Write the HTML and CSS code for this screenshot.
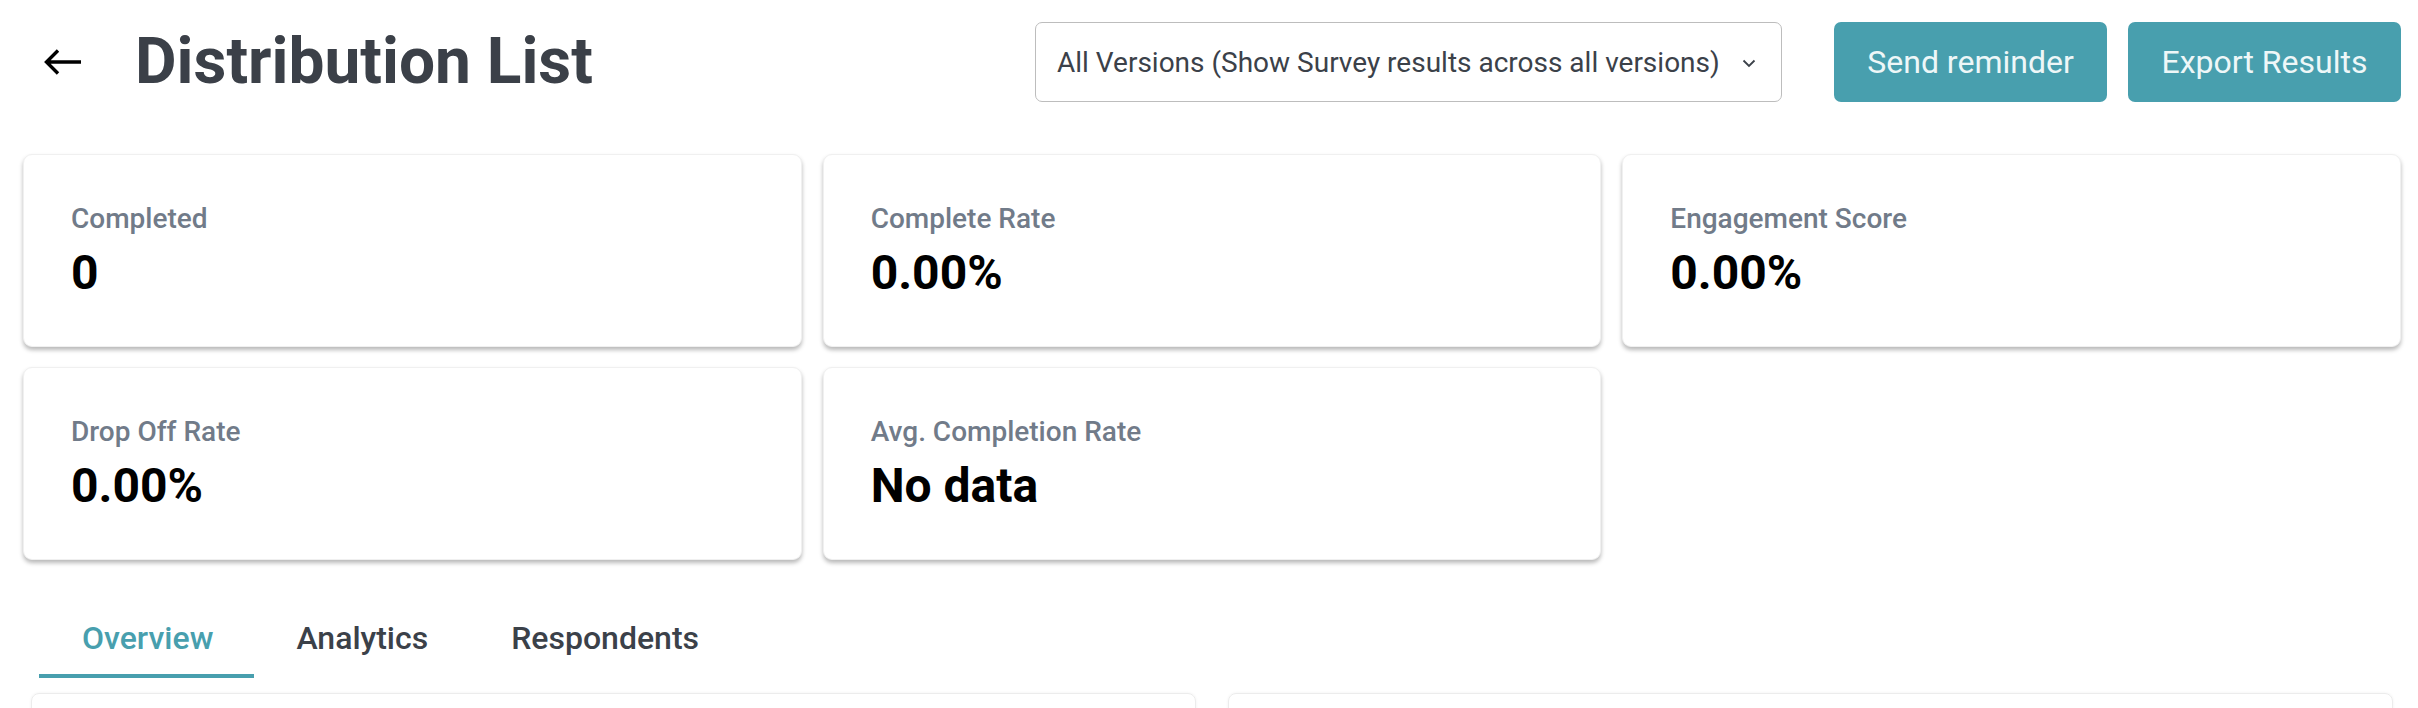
FILE: index.html
```html
<!DOCTYPE html>
<html>
<head>
<meta charset="utf-8">
<link rel="stylesheet" href="styles.css">
</head>
<body>
<div class="page">
  <header class="header">
    <div class="title-group">
      <button class="back" aria-label="Back">
        <svg width="40" height="30" viewBox="0 0 40 30"><path d="M38 15 H4 M15 3.5 L3.5 15 L15 26.5" fill="none" stroke="#000" stroke-width="3.4" stroke-linecap="butt" stroke-linejoin="miter"/></svg>
      </button>
      <h1 class="title">Distribution List</h1>
    </div>
    <div class="actions">
      <div class="select">
        <span>All Versions (Show Survey results across all versions)</span>
        <svg class="chev" width="14" height="9" viewBox="0 0 14 9"><path d="M1.5 1.5 L7 7 L12.5 1.5" fill="none" stroke="#3b4149" stroke-width="1.8"/></svg>
      </div>
      <button class="btn">Send reminder</button>
      <button class="btn">Export Results</button>
    </div>
  </header>

  <section class="cards">
    <div class="card"><div class="label">Completed</div><div class="value">0</div></div>
    <div class="card"><div class="label">Complete Rate</div><div class="value">0.00%</div></div>
    <div class="card"><div class="label">Engagement Score</div><div class="value">0.00%</div></div>
    <div class="card"><div class="label">Drop Off Rate</div><div class="value">0.00%</div></div>
    <div class="card"><div class="label">Avg. Completion Rate</div><div class="value">No data</div></div>
  </section>

  <nav class="tabs">
    <div class="tab active">Overview</div>
    <div class="tab">Analytics</div>
    <div class="tab">Respondents</div>
  </nav>

  <section class="panels">
    <div class="panel"></div>
    <div class="panel"></div>
  </section>
</div>
</body>
</html>
```

FILE: styles.css
```css
* { box-sizing: border-box; }
html, body { margin: 0; padding: 0; background: #fff; }
body { font-family: Roboto, "Noto Sans", Arial, sans-serif; color: #3b4149; overflow: hidden; }

.page { padding: 0 17px 0 23px; }

.header {
  display: flex;
  align-items: center;
  justify-content: space-between;
  padding-top: 22px;
  height: 102px;
}
.title-group { display: flex; align-items: center; }
.back {
  border: 0; background: none; padding: 0; margin: 0 0 0 20px;
  width: 40px; height: 30px; display: flex; cursor: pointer;
}
.title {
  margin: 0 0 0 52px;
  font-size: 64px;
  font-weight: 700;
  color: #3b4048;
  line-height: 80px;
  letter-spacing: 0;
}
.actions { display: flex; align-items: center; height: 80px; }
.select {
  width: 747px; height: 80px;
  border: 1.5px solid #bdbdbd;
  border-radius: 7px;
  display: flex; align-items: center; justify-content: space-between;
  padding: 0 25px 0 21px;
  font-size: 28px;
  color: #3b4149;
  margin-right: 52px;
}
.chev { margin-top: 2px; }
.btn {
  height: 80px;
  border: 0;
  border-radius: 7px;
  background: #489fae;
  color: #eef7f8;
  font-family: Roboto, sans-serif;
  font-size: 32px;
  font-weight: 400;
  padding: 0;
  width: 273px;
  margin-left: 21px;
}
.btn:first-of-type { margin-left: 0; }

.cards {
  margin-top: 52px;
  display: grid;
  grid-template-columns: repeat(3, 1fr);
  grid-auto-rows: 193px;
  gap: 20px 21px;
}
.card {
  background: #fff;
  border-radius: 9px;
  border: 1px solid #f0f0f0;
  box-shadow: 0 3px 4px rgba(0,0,0,0.28);
  padding: 47px 0 0 47px;
}
.label {
  font-size: 28px;
  font-weight: 500;
  color: #717b89;
}
.value {
  margin-top: 9px;
  font-size: 48px;
  font-weight: 700;
  color: #000;
}

.tabs {
  display: flex;
  margin: 36px 0 0 16px;
}
.tab {
  padding: 23px 41px 17px 42px;
  font-size: 32px;
  font-weight: 500;
  color: #3b4149;
  border-bottom: 4px solid transparent;
}
.tab.active { color: #489fae; border-bottom-color: #489fae; padding-left: 43px; }

.panels {
  margin: 15px 8px 0;
  display: grid;
  grid-template-columns: 1fr 1fr;
  gap: 32px;
}
.panel {
  height: 120px;
  border: 1px solid #ececec;
  border-radius: 8px;
  box-shadow: 0 0 3px rgba(0,0,0,0.06);
}
```
